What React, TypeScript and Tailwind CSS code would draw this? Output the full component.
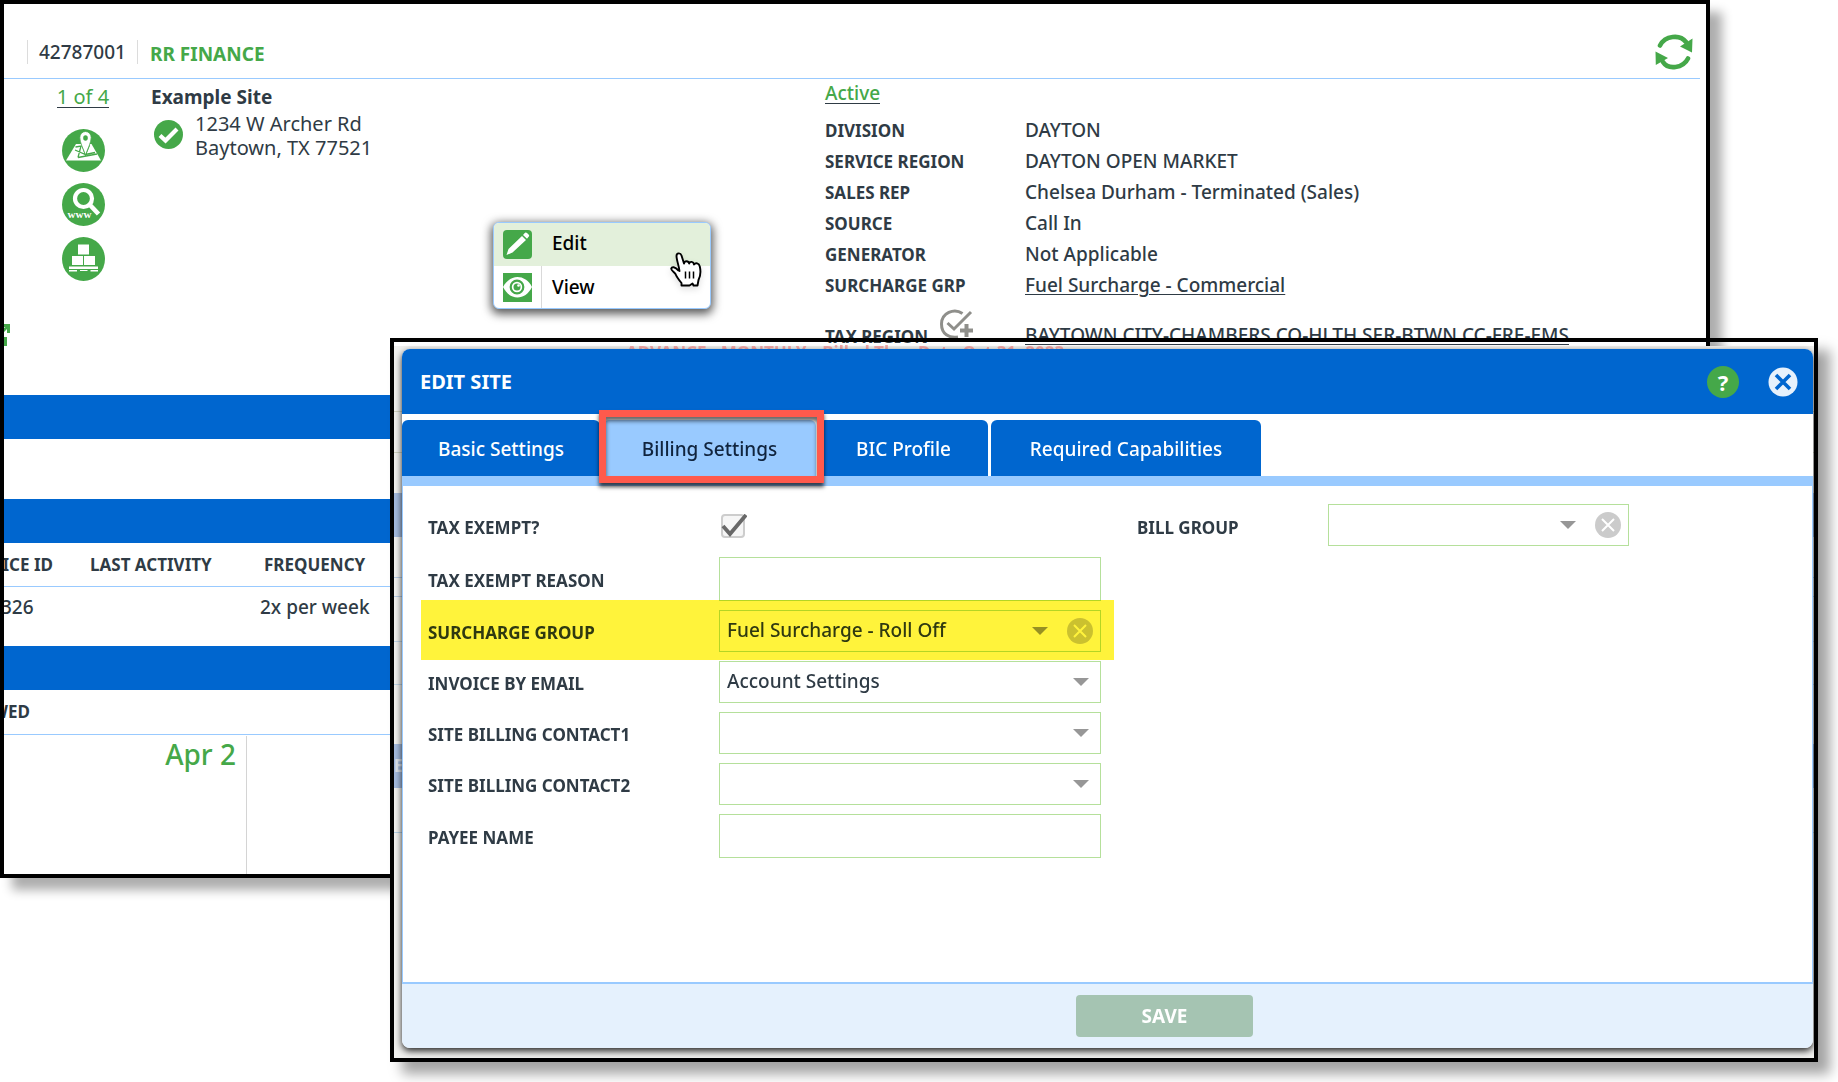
import { useState } from 'react';
import type { ReactNode } from 'react';

const details = [
  { label: 'DIVISION', value: 'DAYTON' },
  { label: 'SERVICE REGION', value: 'DAYTON OPEN MARKET' },
  { label: 'SALES REP', value: 'Chelsea Durham - Terminated (Sales)' },
  { label: 'SOURCE', value: 'Call In' },
  { label: 'GENERATOR', value: 'Not Applicable' },
  { label: 'SURCHARGE GRP', value: 'Fuel Surcharge - Commercial', link: true },
];

const tabs = [
  { name: 'Basic Settings', width: 'w-[198px]' },
  { name: 'Billing Settings', width: 'w-[213px]' },
  { name: 'BIC Profile', width: 'w-[169px]' },
  { name: 'Required Capabilities', width: 'w-[270px]' },
];

function RefreshIcon() {
  return (
    <svg viewBox="0 0 38 36" className="h-9 w-[38px]" aria-hidden="true">
      <g fill="none" stroke="#45a849" strokeWidth="4.6" strokeLinecap="round">
        <path d="M5 11.500 C10 1.500 25 0 31 8" />
        <path d="M33 24.500 C28 34.500 13 36 8 28" />
      </g>
      <path fill="#45a849" d="M37.500 4.500 L37 18.500 L25 12.500 Z M.5 17.500 L13 24 L.8 31 Z" />
    </svg>
  );
}

function MapIcon() {
  return (
    <svg viewBox="0 0 43 43" className="size-[43px]" aria-hidden="true">
      <circle cx="21.500" cy="21.500" r="21.500" fill="#45a849" />
      <path fill="#fff" d="M14 15 H29.500 L39 31.500 H4 Z" />
      <g fill="none" stroke="#45a849" strokeWidth="1.300">
        <path d="M13 21 L23.500 25.500 L33 23.500 M16 28.500 L35 25 M13.500 18 L19 17 L16 28.500 M20 16 L23.500 26 L27.500 16" />
      </g>
      <path fill="#fff" stroke="#45a849" strokeWidth=".8" d="M23.500 26 C21 19 17.800 13.500 17.800 8.500 A5.700 6 0 0 1 29.200 8.500 C29.200 13.500 26 19 23.500 26 Z" />
      <ellipse cx="23.500" cy="9" rx="2.300" ry="2.800" fill="#45a849" />
    </svg>
  );
}

function WebSearchIcon() {
  return (
    <svg viewBox="0 0 43 43" className="size-[43px]" aria-hidden="true">
      <circle cx="21.500" cy="21.500" r="21.500" fill="#45a849" />
      <circle cx="21.500" cy="15.500" r="8.500" fill="none" stroke="#fff" strokeWidth="4.200" />
      <path d="M28 22 L36.500 31" stroke="#fff" strokeWidth="4.600" />
      <text x="17.500" y="35" textAnchor="middle" fill="#fff" className="font-['Liberation_Serif',serif] text-[11px] font-bold">
        www
      </text>
    </svg>
  );
}

function BoxesIcon() {
  return (
    <svg viewBox="0 0 43 44" className="h-11 w-[43px]" aria-hidden="true">
      <ellipse cx="21.500" cy="22" rx="21.500" ry="22" fill="#45a849" />
      <path
        fill="#fff"
        d="M16 7.500 H27 V17.500 H16 Z M10 19 H21 V28 H10 Z M22 19 H33 V28 H22 Z M7 29.500 H36 V32 H7 Z M7 33 H15 V34.500 H7 Z M18 33 H25.500 V34 H18 Z M28.500 33 H36 V34.500 H28.500 Z"
      />
    </svg>
  );
}

function CheckIcon() {
  return (
    <svg viewBox="0 0 29 29" className="size-[29px]" role="img" aria-label="Verified">
      <circle cx="14.500" cy="14.500" r="14.500" fill="#45a849" />
      <path d="M6 15.500 L11.500 20.500 L23 9" fill="none" stroke="#fff" strokeWidth="4.200" />
    </svg>
  );
}

function AddCheckIcon() {
  return (
    <svg viewBox="0 0 34 30" className="h-[30px] w-[34px]" aria-hidden="true">
      <g fill="none" stroke="#8f8f8b" strokeWidth="3">
        <path d="M22.500 4.500 C14 -1.500 1.500 4 1.500 15 C1.500 25 9 29.500 18 28" />
        <path d="M7.500 14 L14 20 L31 3" />
        <path strokeWidth="4" d="M20 21.500 H33 M26.500 15 V28" />
      </g>
    </svg>
  );
}

function PencilIcon() {
  return (
    <svg viewBox="0 0 29 29" className="size-[29px]" aria-hidden="true">
      <rect width="29" height="29" rx="4" fill="#45a849" />
      <path fill="#fff" d="M19 6 L23 10 L9.500 22.500 L3.500 25 L5.500 19 Z M20 5 L22 2.800 Q23 2 24 3 L25.800 4.800 Q26.500 5.800 25.800 6.500 L24 8.800 Z" />
    </svg>
  );
}

function EyeIcon() {
  return (
    <svg viewBox="0 0 29 29" className="size-[29px]" aria-hidden="true">
      <rect width="29" height="29" fill="#45a849" />
      <path fill="#fff" d="M0 14 C7 .8 22 .8 29 14 C22 28 7 28 0 14 Z" />
      <circle cx="14" cy="14" r="6.300" fill="#fff" stroke="#45a849" strokeWidth="2.200" />
      <circle cx="14" cy="14" r="3.500" fill="#45a849" />
      <circle cx="15.500" cy="12.500" r="1.300" fill="#fff" />
    </svg>
  );
}

function HandCursor() {
  return (
    <svg viewBox="0 0 32 36" className="h-9 w-8 drop-shadow-md" aria-hidden="true">
      <path
        fill="#fff"
        stroke="#000"
        strokeWidth="1.900"
        strokeLinejoin="round"
        d="M11.500 33.500 V31 C9 28 6.500 25 5.500 22 C4.500 20 1 18.500 1.200 16.500 C1.800 14.500 5 14.500 8.500 18.500 L9.500 19 C9 14 6.500 8 6.500 4 C6.500 .8 10.500 .5 11.500 3.500 L14 11.500 C14.500 8.500 18.500 8.500 19.200 11.500 C20 9 23.500 9.500 24 12.500 C25.500 10.500 29 11 29.800 14.500 C31 19.500 31 23 28.500 28 L27.500 33.500 H23.500 L22.500 31.500 L19.500 33.500 Z"
      />
      <path d="M15.500 19.500 V26.500 M19.500 19.500 V26.500 M23.500 19.500 V26.500" stroke="#000" strokeWidth="1.500" />
    </svg>
  );
}

function Arrow() {
  return (
    <svg viewBox="0 0 16 8" className="h-2 w-4" aria-hidden="true">
      <path d="M0 0 H16 L8 8 Z" fill="#979797" />
    </svg>
  );
}

function ClearButton({ label }: { label: string }) {
  return (
    <button type="button" aria-label={label} className="size-[26px]">
      <svg viewBox="0 0 26 26" aria-hidden="true">
        <circle cx="13" cy="13" r="13" fill="#cbcbcb" />
        <path d="M7 7 L19 19 M19 7 L7 19" stroke="#fff" strokeWidth="2" />
      </svg>
    </button>
  );
}

type FieldProps = { id: string; label: string; tall?: boolean; highlight?: boolean; children: ReactNode };

function Field({ id, label, tall, highlight, children }: FieldProps) {
  return (
    <div className={`relative flex items-center ${tall ? 'h-11' : 'h-[42px]'}`}>
      <label htmlFor={id} className="w-[291px] shrink-0 pt-1 text-[17px] leading-6 font-bold">
        {label}
      </label>
      {children}
      {highlight && <div className="pointer-events-none absolute -top-[10px] -right-[13px] -bottom-2 -left-[7px] bg-[#fff33b] mix-blend-multiply" />}
    </div>
  );
}

type PickerProps = { id: string; options: string[]; clearLabel?: string };

function Picker({ id, options, clearLabel }: PickerProps) {
  return (
    <div className="relative h-[42px] flex-1">
      <select id={id} className="size-full appearance-none border border-[#b5e09b] bg-white px-[7px] pb-0.5 text-[19px] font-medium">
        {options.map((option) => (
          <option key={option}>{option}</option>
        ))}
      </select>
      <div className="pointer-events-none absolute inset-y-0 right-2 flex items-center gap-[19px]">
        <div className={clearLabel ? '' : 'pr-1'}>
          <Arrow />
        </div>
        {clearLabel && <ClearButton label={clearLabel} />}
      </div>
    </div>
  );
}

function SiteWindow() {
  return (
    <main className="mr-32 overflow-hidden border-4 border-black bg-white shadow-[12px_12px_10px_rgba(0,0,0,0.32)]">
      <header className="mr-1.5 flex h-[75px] items-center border-b border-[#99caff] pt-[22px] pl-[23px]">
        <span className="border-x border-[#dcdcdc] px-[11px] text-[19px] leading-6 font-medium">42787001</span>
        <h1 className="pt-1 pl-3 text-[19px] leading-6 font-bold text-[#45a849]">RR FINANCE</h1>
        <button type="button" aria-label="Refresh" className="mr-[7px] ml-auto">
          <RefreshIcon />
        </button>
      </header>

      <section className="flex h-[316px]">
        <div className="flex w-[147px] shrink-0 flex-col items-center pt-2 pl-[11px]">
          <a href="#sites" className="border-b border-[#2f3b45] text-[20px] leading-5 text-[#45a849]">
            1 of 4
          </a>
          <div className="mt-[21px] flex flex-col gap-[11px]">
            <button type="button" aria-label="Map"><MapIcon /></button>
            <button type="button" aria-label="Web search"><WebSearchIcon /></button>
            <button type="button" aria-label="Inventory"><BoxesIcon /></button>
          </div>
        </div>

        <div className="w-[674px] shrink-0 pt-1.5">
          <h2 className="text-[19px] leading-6 font-bold">Example Site</h2>
          <div className="flex gap-3 pl-[3px]">
            <div className="pt-[11px]">
              <CheckIcon />
            </div>
            <address className="pt-[3px] text-[20px] leading-6 not-italic">
              1234 W Archer Rd
              <br />
              Baytown, TX 77521
            </address>
          </div>
        </div>

        <div className="min-w-0 flex-1 pt-[3px]">
          <a href="#status" className="inline-block border-b border-[#2f3b45] text-[19px] leading-5 font-medium text-[#45a849]">
            Active
          </a>
          <dl className="mt-[9px]">
            {details.map((row) => (
              <div key={row.label} className="flex h-[31px] items-center">
                <dt className="w-[200px] shrink-0 text-[17px] font-bold">{row.label}</dt>
                <dd className="text-[19px] font-medium whitespace-nowrap">
                  {row.link ? <a href="#surcharge" className="underline underline-offset-2">{row.value}</a> : row.value}
                </dd>
              </div>
            ))}
            <div className="flex items-start pt-2">
              <dt className="flex w-[200px] shrink-0 items-start gap-3 text-[17px] font-bold">
                <span className="pt-[15px]">TAX REGION</span>
                <AddCheckIcon />
              </dt>
              <dd className="pt-3 text-[19px] font-medium whitespace-nowrap">
                <a href="#tax" className="underline underline-offset-2">BAYTOWN CITY-CHAMBERS CO-HLTH SER-BTWN CC-FRE-EMS</a>
              </dd>
            </div>
          </dl>
        </div>
      </section>

      <div className="h-11 bg-[#0066cf]" />
      <div className="h-[60px]" />
      <div className="h-11 bg-[#0066cf]" />
      <table className="w-full table-fixed text-left">
        <thead>
          <tr className="h-[43px] border-b border-[#99caff] text-[17px]">
            <th className="w-[86px] pr-[37px] text-right whitespace-nowrap">
              <span className="float-right">SERVICE ID</span>
            </th>
            <th className="w-[174px]">LAST ACTIVITY</th>
            <th>FREQUENCY</th>
          </tr>
        </thead>
        <tbody>
          <tr className="h-[60px] align-top text-[19px] font-medium">
            <td className="pt-1.5">
              <span className="-ml-[3px]">326</span>
            </td>
            <td />
            <td className="pt-1.5">
              <span className="-ml-1">2x per week</span>
            </td>
          </tr>
        </tbody>
      </table>
      <div className="h-11 bg-[#0066cf]" />
      <div className="flex h-[45px] items-center border-b border-[#99caff] text-[17px] font-bold">
        <span className="flex w-[26px] justify-end">VIEWED</span>
      </div>
      <div className="mt-px flex h-[138px]">
        <div className="w-[243px] border-r border-[#d4d4d4] pr-[10px] text-right text-[28px] leading-9 font-medium text-[#45a849]">Apr 2</div>
      </div>
    </main>
  );
}

function ContextMenu() {
  return (
    <div className="absolute top-[222px] left-[493px] w-[218px] overflow-hidden rounded-md border border-[#99caff] bg-white shadow-[0_3px_10px_2px_rgba(0,0,0,0.65)]">
      <button type="button" className="flex h-[43px] w-full items-center bg-[#e3f0db] pl-[9px] text-[19px] font-medium text-black">
        <PencilIcon />
        <span className="pb-0.5 pl-5">Edit</span>
      </button>
      <button type="button" className="flex h-[42px] w-full items-center pl-[9px] text-[19px] font-medium text-black">
        <EyeIcon />
        <span className="ml-[9px] flex h-full items-center border-l border-[#d9d9d9] pl-[10px]">View</span>
      </button>
    </div>
  );
}

// Dimmed page that shows round the edges of the dialog
function Backdrop() {
  return (
    <div className="absolute inset-0 -z-10 overflow-hidden bg-[linear-gradient(transparent_4px,#f1f1ef_4px)]" aria-hidden="true">
      <div className="flex gap-3 pt-px pl-[232px] text-[17px] leading-5 font-bold whitespace-nowrap text-[#f3a9a9]">
        <span>ADVANCE - MONTHLY,</span>
        <span>Billed Thru Date Oct 31, 2023</span>
      </div>
      <div className="mt-12 h-[42px] border-y border-[#cfd3c2]" />
      <div className="mt-10 h-11 bg-[#a4bbdf]" />
      <div className="mt-10 h-5 border-y border-[#b5cbe4]" />
      <div className="mt-11 h-11 border-y border-[#bfd5e6]" />
      <div className="mt-[59px] h-11 bg-[#a4bbdf] pt-3 text-[17px] leading-5 font-bold text-[#dfe5ee]">E</div>
      <div className="mt-11 h-px bg-[#b5d0e4]" />
    </div>
  );
}

function EditSiteDialog() {
  const [active, setActive] = useState('Billing Settings');
  const [exempt, setExempt] = useState(true);

  return (
    <div className="absolute top-[338px] right-5 left-[390px] isolate border-4 border-black pt-[7px] pr-px pb-[10px] pl-2 shadow-[12px_12px_12px_rgba(0,0,0,0.36)]">
      <Backdrop />
      <div role="dialog" aria-labelledby="dialog-title" className="rounded-lg bg-white shadow-[0_3px_7px_rgba(0,0,0,0.85)]">
        <header className="flex h-[65px] items-center rounded-t-lg bg-[#0066cf] pr-[15px] pl-[18px] text-white">
          <h2 id="dialog-title" className="text-[20px] font-bold">EDIT SITE</h2>
          <button type="button" aria-label="Help" className="ml-auto size-8 rounded-full bg-[#45a849] text-[22px] leading-8 font-bold">
            ?
          </button>
          <button type="button" aria-label="Close" className="ml-[29px]">
            <svg viewBox="0 0 30 30" className="size-[30px]" aria-hidden="true">
              <circle cx="15" cy="15" r="14.500" fill="#e6f1fc" />
              <path d="M8 8 L22 22 M22 8 L8 22" stroke="#0066cf" strokeWidth="3.600" />
            </svg>
          </button>
        </header>

        <div role="tablist" className="mt-1.5 flex gap-[3px] border-b-10 border-[#99caff]">
          {tabs.map((tab) => (
            <div key={tab.name} className={`relative ${tab.width}`}>
              <button
                type="button"
                role="tab"
                aria-selected={tab.name === active}
                onClick={() => setActive(tab.name)}
                className={`h-14 w-full rounded-t-md pt-0.5 text-[19px] font-medium ${tab.name === active ? 'bg-[#99caff] text-[#10243e]' : 'bg-[#0066cf] text-white'}`}
              >
                {tab.name}
              </button>
              {tab.name === 'Billing Settings' && (
                <div className="pointer-events-none absolute -top-[10px] -right-2 -bottom-[7px] -left-1 z-10 border-7 border-[#ff5a4c] shadow-[0_4px_4px_rgba(0,0,0,0.7),inset_0_4px_4px_rgba(0,0,0,0.6)]" />
              )}
            </div>
          ))}
        </div>

        <form className="flex min-h-[496px] items-start border-x border-[#99caff] pt-[18px] pl-[25px]">
          <div className="flex w-[673px] shrink-0 flex-col gap-[9px]">
            <Field id="exempt" label="TAX EXEMPT?" tall>
              <div className="relative ml-0.5 size-6">
                <input
                  id="exempt"
                  type="checkbox"
                  checked={exempt}
                  onChange={() => setExempt(!exempt)}
                  className="size-6 appearance-none rounded-sm border-2 border-[#cdcdcd] bg-[#f6f6f6]"
                />
                {exempt && (
                  <svg viewBox="0 0 26 26" className="pointer-events-none absolute inset-0 size-[26px]" aria-hidden="true">
                    <path d="M2 12 L9 20 L25 1" fill="none" stroke="#686868" strokeWidth="3.800" />
                  </svg>
                )}
              </div>
            </Field>
            <Field id="reason" label="TAX EXEMPT REASON" tall>
              <input id="reason" type="text" className="h-full flex-1 border border-[#b5e09b] px-[7px] text-[19px]" />
            </Field>
            <Field id="surcharge" label="SURCHARGE GROUP" highlight>
              <Picker id="surcharge" options={['Fuel Surcharge - Roll Off', 'Fuel Surcharge - Commercial']} clearLabel="Clear surcharge group" />
            </Field>
            <Field id="email" label="INVOICE BY EMAIL">
              <Picker id="email" options={['Account Settings']} />
            </Field>
            <Field id="contact1" label="SITE BILLING CONTACT1">
              <Picker id="contact1" options={['']} />
            </Field>
            <Field id="contact2" label="SITE BILLING CONTACT2">
              <Picker id="contact2" options={['']} />
            </Field>
            <Field id="payee" label="PAYEE NAME" tall>
              <input id="payee" type="text" className="h-full flex-1 border border-[#b5e09b] px-[7px] text-[19px]" />
            </Field>
          </div>

          <div className="ml-9 flex w-[492px] shrink-0 items-center">
            <label htmlFor="bill-group" className="w-[191px] shrink-0 pt-1.5 text-[17px] leading-6 font-bold">
              BILL GROUP
            </label>
            <Picker id="bill-group" options={['']} clearLabel="Clear bill group" />
          </div>
        </form>

        <footer className="flex h-[66px] items-center justify-center rounded-b-lg border-t-2 border-[#99caff] bg-[#e5f1fd] pl-[114px]">
          <button type="button" className="h-[42px] w-[177px] rounded bg-[#a5c4b2] text-[19px] font-bold text-white">
            SAVE
          </button>
        </footer>
      </div>
    </div>
  );
}

export default function App() {
  return (
    <div className="relative min-h-screen overflow-hidden bg-white font-['Noto_Sans',sans-serif] text-[#2f3b45]">
      <SiteWindow />
      <svg viewBox="0 0 6 23" className="absolute top-[324px] left-1 h-[23px] w-1.5" aria-hidden="true">
        <path fill="#45a849" d="M0 0 H6 V9 H3 V5 L0 8 V4 L1.500 3 H0 Z M0 13 H3 V22 H0 Z" />
      </svg>
      <ContextMenu />
      <div className="absolute top-[252px] left-[670px]">
        <HandCursor />
      </div>
      <EditSiteDialog />
    </div>
  );
}
